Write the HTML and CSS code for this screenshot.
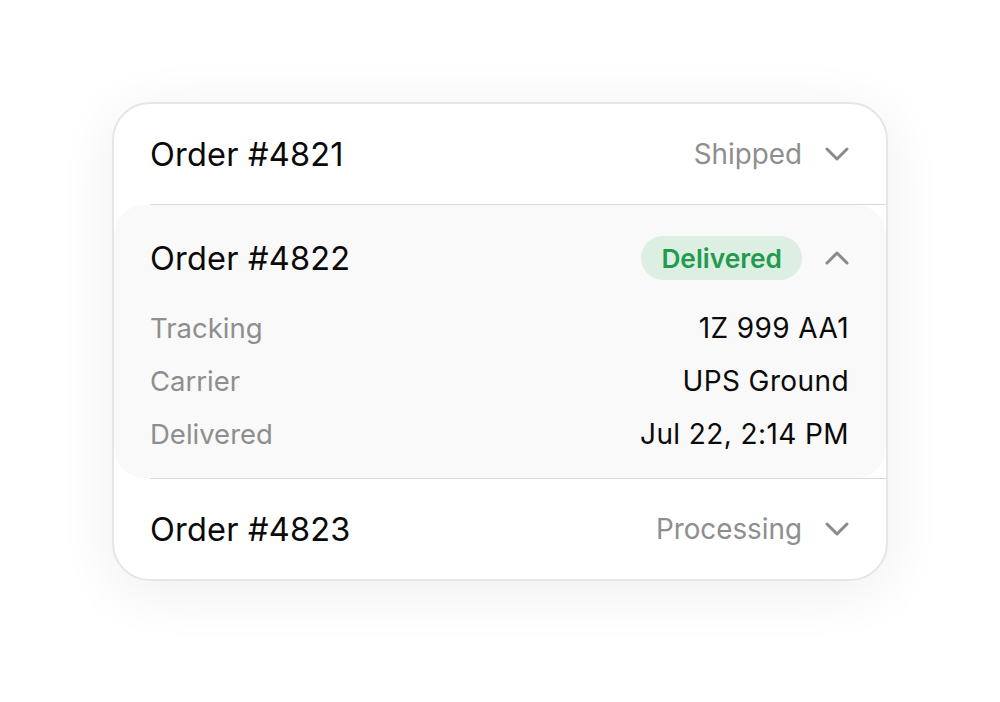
FILE: index.html
```html
<!DOCTYPE html>
<html lang="en">
<head>
<meta charset="utf-8">
<title>Orders</title>
<link rel="stylesheet" href="styles.css">
</head>
<body>
<div class="page">
  <div class="card">
    <div class="item">
      <div class="row">
        <span class="title">Order #4821</span>
        <div class="right">
          <span class="status">Shipped</span>
          <svg class="chev" viewBox="0 0 24 14" width="24" height="14"><path d="M2 2 L12 12 L22 2"/></svg>
        </div>
      </div>
    </div>
    <div class="divider"></div>
    <div class="item open">
      <div class="row head">
        <span class="title">Order #4822</span>
        <div class="right">
          <span class="badge">Delivered</span>
          <svg class="chev" viewBox="0 0 24 14" width="24" height="14"><path d="M2 12 L12 2 L22 12"/></svg>
        </div>
      </div>
      <div class="details">
        <div class="drow"><span class="label">Tracking</span><span class="value">1Z 999 AA1</span></div>
        <div class="drow"><span class="label">Carrier</span><span class="value">UPS Ground</span></div>
        <div class="drow"><span class="label">Delivered</span><span class="value">Jul 22, 2:14 PM</span></div>
      </div>
    </div>
    <div class="divider"></div>
    <div class="item">
      <div class="row">
        <span class="title">Order #4823</span>
        <div class="right">
          <span class="status">Processing</span>
          <svg class="chev" viewBox="0 0 24 14" width="24" height="14"><path d="M2 2 L12 12 L22 2"/></svg>
        </div>
      </div>
    </div>
  </div>
</div>
</body>
</html>
```

FILE: styles.css
```css
* { box-sizing: border-box; }
html, body { margin: 0; padding: 0; background: #ffffff; }
body {
  font-family: Inter, "Noto Sans", "Liberation Sans", sans-serif;
  color: #0a0a0a;
}
.page {
  display: flex;
  justify-content: center;
  align-items: flex-start;
  min-height: 100vh;
  padding-top: 102px;
}
.card {
  width: 776px;
  background: #ffffff;
  border: 2px solid #e6e6e6;
  border-radius: 38px;
  box-shadow: 0 10px 60px rgba(0, 0, 0, 0.07);
  overflow: hidden;
}
.item {
  padding: 0 37px 0 36px;
}
.row {
  display: flex;
  align-items: center;
  justify-content: space-between;
  height: 100px;
}
.title {
  font-size: 32.5px;
  font-weight: 400;
  letter-spacing: 0.2px;
}
.right {
  display: flex;
  align-items: center;
  gap: 23px;
}
.status {
  font-size: 27.8px;
  color: #8e8e8e;
}
.chev {
  width: 24px;
  height: 14px;
  fill: none;
  stroke: #8a8a8a;
  stroke-width: 3;
  stroke-linecap: round;
  stroke-linejoin: round;
}
.divider {
  height: 1px;
  background: #d9d9d9;
  margin-left: 36px;
}
.open {
  background: #f9f9f9;
  border-radius: 30px;
  padding-top: 31px;
  padding-bottom: 18px;
}
.open .head {
  height: 44px;
}
.badge {
  display: inline-flex;
  align-items: center;
  height: 44px;
  padding: 0 20px;
  border-radius: 22px;
  background: #dcefe2;
  color: #239a4e;
  font-size: 26.3px;
  font-weight: 600;
}
.details {
  margin-top: 21px;
}
.drow {
  display: flex;
  justify-content: space-between;
  align-items: center;
  height: 53px;
}
.label {
  color: #8e8e8e;
  font-size: 27.5px;
}
.value {
  color: #0a0a0a;
  font-size: 28px;
  letter-spacing: 0.4px;
}
```
